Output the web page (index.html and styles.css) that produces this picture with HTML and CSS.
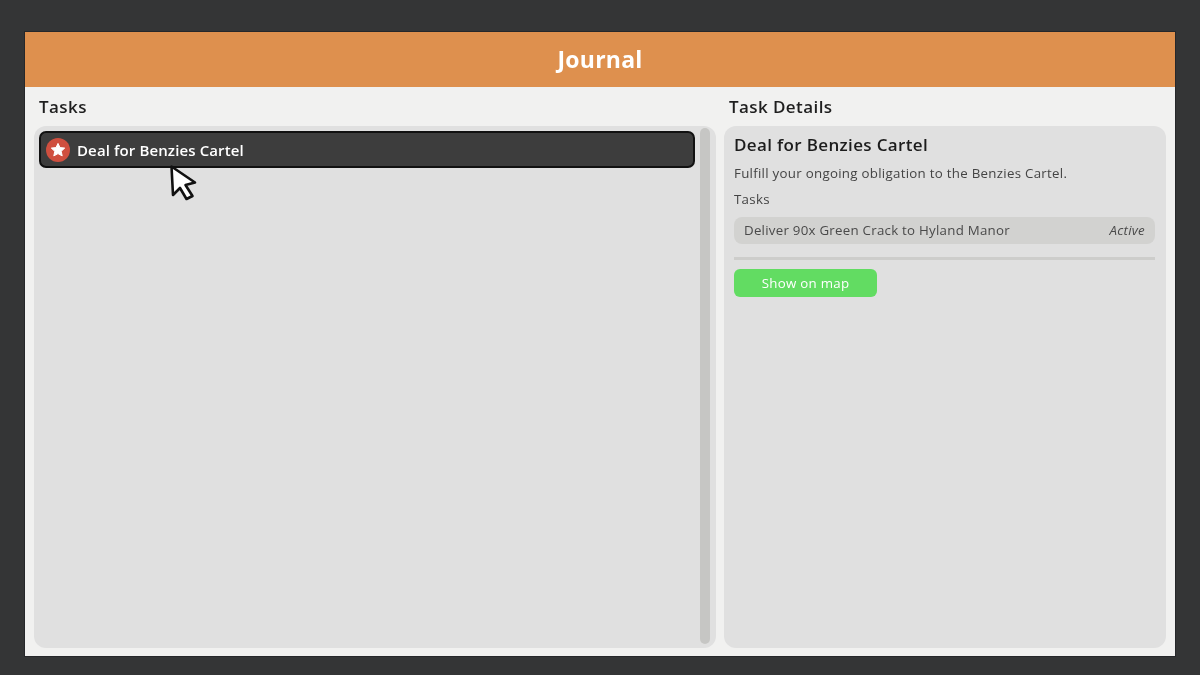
FILE: index.html
```html
<!DOCTYPE html>
<html lang="en">
<head>
<meta charset="utf-8">
<title>Journal</title>
<link rel="stylesheet" href="styles.css">
</head>
<body>
<div class="window">
  <header class="titlebar">Journal</header>
  <main class="columns">
    <section class="col">
      <h2 class="col-title">Tasks</h2>
      <div class="panel list-panel">
        <div class="list">
          <div class="quest">
            <span class="badge">
              <svg viewBox="0 0 24 24" width="24" height="24" aria-hidden="true">
                <circle cx="12" cy="12" r="12" fill="#CF4F3F"/>
                <path d="M12 5.4l2 4.2 4.7.5-3.5 3.2 1 4.6-4.2-2.3-4.2 2.3 1-4.6-3.5-3.2 4.7-.5z" fill="#fff" stroke="#fff" stroke-width="1" stroke-linejoin="round"/>
              </svg>
            </span>
            <span class="quest-name">Deal for Benzies Cartel</span>
          </div>
        </div>
        <div class="scrollbar"></div>
      </div>
    </section>
    <section class="col">
      <h2 class="col-title">Task Details</h2>
      <div class="panel details">
        <h3 class="details-title">Deal for Benzies Cartel</h3>
        <p class="details-desc">Fulfill your ongoing obligation to the Benzies Cartel.</p>
        <p class="details-label">Tasks</p>
        <div class="task-row">
          <span>Deliver 90x Green Crack to Hyland Manor</span>
          <em class="task-state">Active</em>
        </div>
        <div class="divider"></div>
        <button class="map-btn" type="button">Show on map</button>
      </div>
    </section>
  </main>
</div>
<svg class="cursor" viewBox="0 0 30 38" width="30" height="38" aria-hidden="true">
  <path d="M2.5 2.5L4 31L11 24L17.5 35L23.5 32L16.5 21L26 18.5Z" fill="#fff" stroke="#111" stroke-width="2.6" stroke-linejoin="round"/>
</svg>
</body>
</html>
```
FILE: styles.css
```css
* { box-sizing: border-box; }
html, body { margin: 0; height: 100%; }
body {
  width: 1200px;
  height: 675px;
  overflow: hidden;
  position: relative;
  padding: 32px 25px 19px;
  background: #343536;
  font-family: "Open Sans", "Noto Sans", sans-serif;
}
.window {
  height: 624px;
  display: flex;
  flex-direction: column;
  background: #F1F1F0;
  box-shadow: 0 0 0 1px #26272a;
  filter: blur(0.35px);
}
.titlebar {
  height: 55px;
  flex: none;
  display: flex;
  align-items: center;
  justify-content: center;
  padding-bottom: 2px;
  background: #DE904E;
  color: #fff;
  font-size: 23px;
  font-weight: 700;
  letter-spacing: 0.22px;
}
.columns {
  flex: 1;
  min-height: 0;
  display: grid;
  grid-template-columns: 682px 442px;
  gap: 8px;
  padding: 0 9px 8px;
}
.col { display: flex; flex-direction: column; min-height: 0; }
.col-title {
  height: 39px;
  flex: none;
  margin: 0;
  padding: 9px 0 0 5px;
  color: #1f1f1f;
  font-size: 17px;
  line-height: 22px;
  font-weight: 600;
  letter-spacing: 0.42px;
}
.panel {
  flex: 1;
  min-height: 0;
  background: #E0E0E0;
  border-radius: 12px;
}
.list-panel {
  display: flex;
  gap: 5px;
  padding: 2px 6px 4px 5px;
}
.list { flex: 1; padding-top: 3px; }
.quest {
  height: 37px;
  display: flex;
  align-items: center;
  gap: 7px;
  padding-left: 5px;
  background: #3D3D3D;
  border: 2px solid #111;
  border-radius: 7px;
}
.badge { display: flex; flex: none; width: 24px; height: 24px; }
.quest-name {
  color: #fff;
  font-size: 15px;
  font-weight: 600;
  letter-spacing: 0.12px;
  white-space: nowrap;
  padding-top: 1px;
}
.scrollbar {
  width: 10px;
  flex: none;
  background: #C6C6C4;
  border-radius: 5px;
}
.details { padding: 8px 11px 0 10px; }
.details-title {
  margin: 0;
  color: #1c1c1c;
  font-size: 17px;
  line-height: 22px;
  font-weight: 600;
  letter-spacing: 0.35px;
}
.details-desc {
  margin: 8px 0 0;
  color: #444;
  font-size: 13.3px;
  line-height: 18px;
  letter-spacing: 0.28px;
}
.details-label {
  margin: 8px 0 0;
  color: #444;
  font-size: 13.3px;
  line-height: 18px;
  letter-spacing: 0.3px;
}
.task-row {
  height: 27px;
  margin-top: 9px;
  display: flex;
  align-items: center;
  justify-content: space-between;
  padding: 0 10px 1px;
  background: #D2D2D0;
  border-radius: 8px;
  color: #4a4a4a;
  font-size: 13.3px;
  letter-spacing: 0.25px;
}
.task-state { font-style: italic; }
.divider {
  height: 3px;
  margin-top: 13px;
  background: #CDCDCB;
}
.map-btn {
  display: block;
  width: 143px;
  height: 28px;
  margin-top: 9px;
  padding: 0;
  border: 0;
  border-radius: 6px;
  background: #62DC62;
  color: #fff;
  font-family: inherit;
  font-size: 13.3px;
  font-weight: 400;
  letter-spacing: 0.27px;
}
.cursor {
  position: absolute;
  left: 169px;
  top: 164px;
}
```
